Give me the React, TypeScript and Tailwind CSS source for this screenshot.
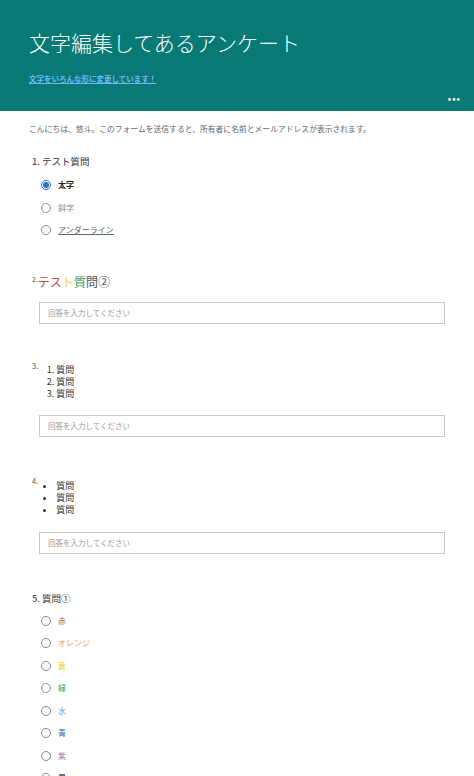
import React from 'react';

const jp = { fontFamily: '"Noto Sans CJK JP", "Noto Sans", sans-serif' };

function Radio({ checked = false }: { checked?: boolean }) {
  return (
    <span
      className={`flex h-[10px] w-[10px] shrink-0 items-center justify-center rounded-full border ${
        checked ? 'border-[#2a6fd1]' : 'border-[#8a8a8a]'
      }`}
    >
      {checked && <span className="h-[6px] w-[6px] rounded-full bg-[#2a6fd1]" />}
    </span>
  );
}

function Option({ children, checked }: { children: React.ReactNode; checked?: boolean }) {
  return (
    <div className="flex h-[22.5px] items-center gap-[7px] pl-[9px]">
      <Radio checked={checked} />
      {children}
    </div>
  );
}

function AnswerBox() {
  return (
    <div className="ml-[7px] mr-[29px] flex h-[22px] items-center border border-[#c8c8c8] px-[8px] text-[7.5px] text-[#999]">
      回答を入力してください
    </div>
  );
}

const colors = [
  { label: '赤', cls: 'text-[#c0504d]' },
  { label: 'オレンジ', cls: 'text-[#e39a63]' },
  { label: '黄', cls: 'text-[#e8d800]' },
  { label: '緑', cls: 'text-[#3a9a5a]' },
  { label: '水', cls: 'text-[#5aa3d6]' },
  { label: '青', cls: 'text-[#2f5f9f]' },
  { label: '紫', cls: 'text-[#8c7fae]' },
  { label: '黒', cls: 'text-[#222]' },
];

export default function App() {
  return (
    <div className="h-[776px] w-full overflow-hidden bg-white" style={jp}>
      {/* Header */}
      <header className="relative flex h-[111px] flex-col bg-[#077a76] px-[29px] pt-[27px]">
        <h1 className="text-[21px] font-light leading-[30px] text-white">文字編集してあるアンケート</h1>
        <a className="mt-[16px] text-[7.5px] font-bold text-[#6fb8f7] underline">
          文字をいろんな形に変更しています！
        </a>
        <span className="absolute bottom-[6px] right-[13px] text-[9px] font-bold tracking-[1px] text-white">
          •••
        </span>
      </header>

      <div className="pl-[32px]">
        <p className="mt-[12px] -ml-[3px] text-[7.8px] leading-[12px] text-[#666]">
          こんにちは、悠斗。このフォームを送信すると、所有者に名前とメールアドレスが表示されます。
        </p>

        {/* Q1 */}
        <div className="mt-[19px] text-[9.5px] leading-[14px] text-[#333]">1. テスト質問</div>
        <div className="mt-[6px] text-[8px]">
          <Option checked>
            <span className="font-bold text-[#222]">太字</span>
          </Option>
          <Option>
            <span className="text-[#888]">斜字</span>
          </Option>
          <Option>
            <span className="text-[#666] underline">アンダーライン</span>
          </Option>
        </div>

        {/* Q2 */}
        <div className="mt-[32px] flex items-start">
          <span className="mt-[1px] text-[7px] leading-[8px] text-[#555]">2.</span>
          <span className="text-[12px] leading-[16px]">
            <span className="text-[#b0553e]">テス</span>
            <span className="text-[#e8d84a]">ト</span>
            <span className="text-[#3c9a55]">質</span>
            <span className="text-[#555]">問②</span>
          </span>
        </div>
        <div className="mt-[12px]">
          <AnswerBox />
        </div>

        {/* Q3 */}
        <div className="mt-[38px] flex items-start">
          <span className="text-[7.5px] leading-[8px] text-[#555]">3.</span>
          <ol className="ml-[10px] mt-[2px] list-decimal pl-[8px] text-[9px] leading-[12px] text-[#333]">
            <li>質問</li>
            <li>質問</li>
            <li>質問</li>
          </ol>
        </div>
        <div className="mt-[15px]">
          <AnswerBox />
        </div>

        {/* Q4 */}
        <div className="mt-[40px] flex items-start">
          <span className="text-[7.5px] leading-[8px] text-[#555]">4.</span>
          <ul className="ml-[5px] mt-[3px] list-disc pl-[13px] text-[9px] leading-[12px] text-[#333]">
            <li>質問</li>
            <li>質問</li>
            <li>質問</li>
          </ul>
        </div>
        <div className="mt-[16px]">
          <AnswerBox />
        </div>

        {/* Q5 */}
        <div className="mt-[37px] text-[9.5px] leading-[14px] text-[#333]">5. 質問①</div>
        <div className="mt-[5px] text-[8px]">
          {colors.map((c) => (
            <Option key={c.label}>
              <span className={c.cls}>{c.label}</span>
            </Option>
          ))}
        </div>
      </div>
    </div>
  );
}
